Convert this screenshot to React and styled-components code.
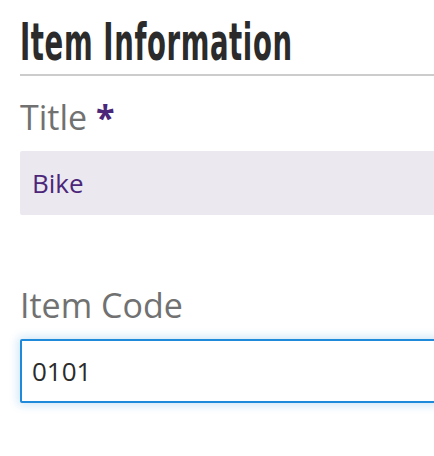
import styled, { createGlobalStyle } from "styled-components";

const GlobalStyle = createGlobalStyle`
  html, body {
    margin: 0;
    padding: 0;
    background: #ffffff;
    overflow: hidden;
  }
`;

export default function App() {
  return (
    <>
      <GlobalStyle />
      <FormSection>
        <SectionTitle>
          <TitleText>Item Information</TitleText>
        </SectionTitle>

        <Field>
          <Label>
            Title <Required>*</Required>
          </Label>
          <TextInput $filled defaultValue="Bike" />
        </Field>

        <Field $spaced>
          <Label>Item Code</Label>
          <TextInput $focused defaultValue="0101" />
        </Field>
      </FormSection>
    </>
  );
}

const FormSection = styled.section`
  width: 560px;
  padding: 15px 0 40px 20px;
  font-family: "Open Sans", "Noto Sans", sans-serif;
`;

const SectionTitle = styled.h2`
  margin: 0;
  padding-bottom: 3px;
  border-bottom: 2px solid #cccccc;
  font-family: "DejaVu Sans Condensed", "DejaVu Sans", sans-serif;
  font-weight: 700;
  font-size: 51px;
  line-height: 56px;
  color: #2b2b2b;
  white-space: nowrap;
`;

/* no condensed display face installed, so squeeze the bold face */
const TitleText = styled.span`
  display: inline-block;
  transform: scaleX(0.6);
  transform-origin: left center;
  letter-spacing: 1px;
`;

const Field = styled.div`
  display: flex;
  flex-direction: column;
  gap: 14px;
  margin-top: ${(p) => (p.$spaced ? "70px" : "21px")};
`;

const Label = styled.label`
  font-size: 34px;
  line-height: 40px;
  color: #717171;
`;

const Required = styled.span`
  color: #4b2679;
  font-weight: 700;
`;

const TextInput = styled.input`
  box-sizing: border-box;
  width: 100%;
  height: 64px;
  padding: 0 10px;
  border-radius: 2px;
  font-family: "Open Sans", "Noto Sans", sans-serif;
  font-size: 26px;
  outline: none;
  border: 2px solid ${(p) => (p.$focused ? "#1f8ad9" : "#ebe8f0")};
  background: ${(p) => (p.$filled ? "#ebe8f0" : "#ffffff")};
  color: ${(p) => (p.$filled ? "#4b2679" : "#2b2b2b")};
  box-shadow: ${(p) =>
    p.$focused ? "0 0 10px 2px rgba(31, 138, 217, 0.22)" : "none"};
`;
